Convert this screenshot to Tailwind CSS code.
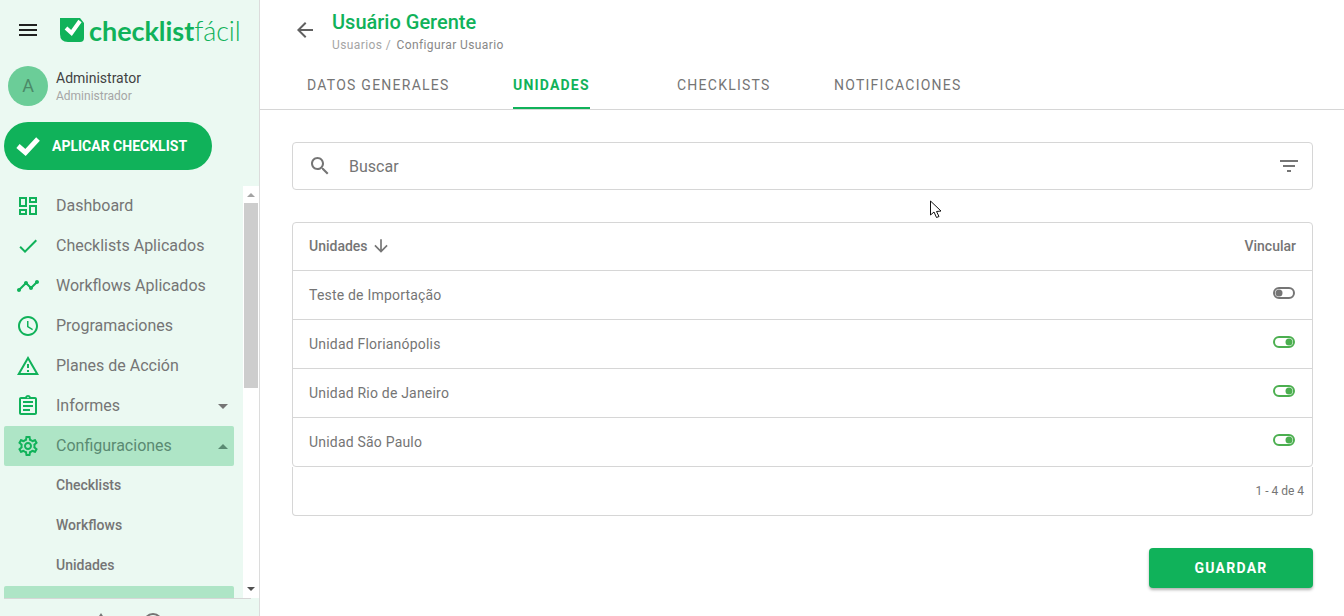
<!DOCTYPE html>
<html lang="pt">
<head>
  <meta charset="UTF-8" />
  <title>Checklist Fácil</title>
  <script src="https://cdn.jsdelivr.net/npm/@tailwindcss/browser@4"></script>
</head>
<body class="h-[616px] overflow-hidden bg-white font-['Roboto',sans-serif] text-[#757575]">
  <div class="relative flex h-[616px]">
    <!-- Sidebar -->
    <aside class="flex h-full w-[260px] shrink-0 flex-col border-r border-[#dcdcdc] bg-[#ebf9f2]">
      <!-- Logo -->
      <div class="flex h-[60px] shrink-0 items-center pl-4">
        <svg class="h-6 w-6 text-[#212121]" viewBox="0 0 24 24" fill="currentColor"><path d="M3 18h18v-2H3v2zm0-5h18v-2H3v2zm0-7v2h18V6H3z"/></svg>
        <svg class="ml-5 h-6 w-6" viewBox="0 0 24 24">
          <path fill="#10b25a" d="M0 0H24V20Q24 24 20 24H8Q0 24 0 16Z"/>
          <path fill="#ebf9f2" d="M17 0H24V5L20 0Z"/>
          <path fill="none" stroke="#fff" stroke-width="4" d="M6 10L11.5 15L20 3"/>
        </svg>
        <span class="ml-[5px] font-['Lato',sans-serif] text-[27px] leading-none tracking-[-0.05px] text-[#10b25a]"><span class="font-bold">checklist</span><span class="font-light">fácil</span></span>
      </div>
      <!-- User -->
      <div class="flex h-[52px] shrink-0 items-center pl-2">
        <div class="flex h-10 w-10 items-center justify-center rounded-full bg-[#6bcd98] text-lg text-[#4b8a68]">A</div>
        <div class="ml-2 pt-px">
          <div class="text-sm leading-[18px] text-[#424242]">Administrator</div>
          <div class="text-xs leading-[18px] text-[#a6a6a6]">Administrador</div>
        </div>
      </div>
      <!-- Apply button -->
      <div class="shrink-0 pl-1 pt-[10px]">
        <div class="flex h-12 w-[208px] items-center rounded-3xl bg-[#10b25a] pl-3 text-sm font-bold text-white">
          <svg class="h-6 w-6" viewBox="0 0 24 24" fill="none" stroke="#fff" stroke-width="5"><path d="M2 12L9.5 18.500L22 5"/></svg>
          <span class="ml-3">APLICAR CHECKLIST</span>
        </div>
      </div>
      <!-- Scrolling menu -->
      <div class="mt-4 flex h-[412px] shrink-0">
        <nav class="w-[243px] overflow-hidden pl-1 pr-[9px] text-base text-[#757575]">
          <a class="flex h-10 items-center pl-3"><svg class="h-6 w-6 fill-[#10b25a]" viewBox="0 0 24 24"><path d="M19 5v2h-4V5h4M9 5v6H5V5h4m10 8v6h-4v-6h4M9 17v2H5v-2h4M21 3h-8v6h8V3zM11 3H3v10h8V3zm10 8h-8v10h8V11zm-10 4H3v6h8v-6z"/></svg><span class="ml-4">Dashboard</span></a>
          <a class="flex h-10 items-center pl-3"><svg class="h-6 w-6 fill-[#10b25a]" viewBox="0 0 24 24"><path d="M9 16.170L4.830 12l-1.420 1.410L9 19 21 7l-1.410-1.410z"/></svg><span class="ml-4">Checklists Aplicados</span></a>
          <a class="flex h-10 items-center pl-3"><svg class="h-6 w-6 fill-[#10b25a]" viewBox="0 0 24 24"><path d="M23 8c0 1.100-.9 2-2 2-.18 0-.35-.02-.51-.07l-3.560 3.550c.05.16.07.34.07.52 0 1.100-.9 2-2 2s-2-.9-2-2c0-.18.02-.36.07-.52l-2.550-2.550c-.16.05-.34.07-.52.07s-.36-.02-.52-.07l-4.550 4.560c.05.16.07.33.07.51 0 1.100-.9 2-2 2s-2-.9-2-2 .9-2 2-2c.18 0 .35.02.51.07l4.560-4.550C8.020 9.360 8 9.180 8 9c0-1.100.9-2 2-2s2 .9 2 2c0 .18-.02.36-.07.52l2.550 2.550c.16-.05.34-.07.52-.07s.36.02.52.07l3.550-3.560C19.020 8.350 19 8.180 19 8c0-1.100.9-2 2-2s2 .9 2 2z"/></svg><span class="ml-4">Workflows Aplicados</span></a>
          <a class="flex h-10 items-center pl-3"><svg class="h-6 w-6 fill-[#10b25a]" viewBox="0 0 24 24"><path d="M11.990 2C6.470 2 2 6.480 2 12s4.470 10 9.990 10C17.520 22 22 17.520 22 12S17.520 2 11.990 2zM12 20c-4.420 0-8-3.580-8-8s3.580-8 8-8 8 3.580 8 8-3.580 8-8 8zm.5-13H11v6l5.250 3.150.75-1.230-4.500-2.670z"/></svg><span class="ml-4">Programaciones</span></a>
          <a class="flex h-10 items-center pl-3"><svg class="h-6 w-6 fill-[#10b25a]" viewBox="0 0 24 24"><path d="M12 5.990L19.530 19H4.470L12 5.990M12 2L1 21h22L12 2zm1 14h-2v2h2v-2zm0-6h-2v4h2v-4z"/></svg><span class="ml-4">Planes de Acción</span></a>
          <a class="flex h-10 items-center pl-3"><svg class="h-6 w-6 fill-[#10b25a]" viewBox="0 0 24 24"><path d="M7 15h7v2H7zm0-4h10v2H7zm0-4h10v2H7zm12-4h-4.180C14.400 1.840 13.300 1 12 1c-1.300 0-2.400.84-2.820 2H5c-1.100 0-2 .9-2 2v14c0 1.100.9 2 2 2h14c1.100 0 2-.9 2-2V5c0-1.100-.9-2-2-2zm-7-.25c.41 0 .75.34.75.75s-.34.75-.75.75-.75-.34-.75-.75.34-.75.75-.75zM19 19H5V5h14v14z"/></svg><span class="ml-4 flex-1">Informes</span><span class="mr-[6px] h-0 w-0 border-x-[5px] border-t-[5px] border-x-transparent border-t-[#757575]"></span></a>
          <a class="flex h-10 items-center rounded-[2px] bg-[#aee5c6] pl-3 text-[#5a8a72]"><svg class="h-6 w-6 fill-[#10b25a]" viewBox="0 0 24 24"><path d="M19.430 12.980c.04-.32.07-.64.07-.98 0-.34-.03-.66-.07-.98l2.110-1.650c.19-.15.24-.42.12-.64l-2-3.460c-.09-.16-.26-.25-.44-.25-.06 0-.12.01-.17.03l-2.490 1c-.52-.4-1.080-.73-1.690-.98l-.38-2.650C14.460 2.180 14.250 2 14 2h-4c-.25 0-.46.18-.49.42l-.38 2.650c-.61.25-1.170.59-1.690.98l-2.490-1c-.06-.02-.12-.03-.18-.03-.17 0-.34.09-.43.25l-2 3.460c-.13.22-.07.49.12.64l2.110 1.650c-.04.32-.07.65-.07.98 0 .33.03.66.07.98l-2.110 1.650c-.19.15-.24.42-.12.64l2 3.460c.09.16.26.25.44.25.06 0 .12-.01.17-.03l2.490-1c.52.4 1.080.73 1.690.98l.38 2.650c.03.24.24.42.49.42h4c.25 0 .46-.18.49-.42l.38-2.650c.61-.25 1.170-.59 1.690-.98l2.490 1c.06.02.12.03.18.03.17 0 .34-.09.43-.25l2-3.460c.12-.22.07-.49-.12-.64l-2.110-1.650zm-1.980-1.710c.04.31.05.52.05.73 0 .21-.02.43-.05.73l-.14 1.130.89.7 1.080.84-.7 1.210-1.270-.51-1.040-.42-.9.68c-.43.32-.84.56-1.250.73l-1.060.43-.16 1.130-.2 1.350h-1.400l-.19-1.350-.16-1.130-1.060-.43c-.43-.18-.83-.41-1.230-.71l-.91-.7-1.060.43-1.270.51-.7-1.210 1.080-.84.89-.7-.14-1.130c-.03-.31-.05-.54-.05-.74s.02-.43.05-.73l.14-1.130-.89-.7-1.080-.84.7-1.210 1.270.51 1.040.42.9-.68c.43-.32.84-.56 1.250-.73l1.060-.43.16-1.130.2-1.350h1.390l.19 1.350.16 1.130 1.060.43c.43.18.83.41 1.230.71l.91.7 1.060-.43 1.270-.51.7 1.210-1.070.85-.89.7.14 1.130zM12 8c-2.210 0-4 1.790-4 4s1.790 4 4 4 4-1.790 4-4-1.790-4-4-4zm0 6c-1.100 0-2-.9-2-2s.9-2 2-2 2 .9 2 2-.9 2-2 2z"/></svg><span class="ml-4 flex-1">Configuraciones</span><span class="mr-[6px] h-0 w-0 border-x-[5px] border-b-[5px] border-x-transparent border-b-[#5a8a72]"></span></a>
          <a class="flex h-10 items-center pb-[2px] pl-[52px] text-sm font-medium text-[#757575]">Checklists</a>
          <a class="flex h-10 items-center pb-[2px] pl-[52px] text-sm font-medium text-[#757575]">Workflows</a>
          <a class="flex h-10 items-center pb-[2px] pl-[52px] text-sm font-medium text-[#757575]">Unidades</a>
          <div class="h-10 rounded-[2px] bg-[#aee5c6]"></div>
        </nav>
        <!-- Scrollbar -->
        <div class="flex w-4 flex-col items-center bg-white">
          <span class="mt-[7px] h-0 w-0 border-x-[4px] border-b-[4px] border-x-transparent border-b-[#a3a3a3]"></span>
          <div class="mt-[6px] h-[185px] w-[14px] bg-[#cdcdcd]"></div>
          <span class="mt-[199px] h-0 w-0 border-x-[4px] border-t-[4px] border-x-transparent border-t-[#505050]"></span>
        </div>
      </div>
      <!-- Footer icons, cut by the window -->
      <div class="ml-1 mr-2 flex shrink-0 justify-center gap-[33px] border-t border-[#d6d6d6] pt-[14px]">
        <span class="h-0 w-0 border-x-[9px] border-b-[14px] border-x-transparent border-b-[#757575]"></span>
        <span class="h-5 w-5 rounded-full border-2 border-[#757575]"></span>
      </div>
    </aside>

    <!-- Main -->
    <main class="min-w-0 flex-1">
      <!-- Header -->
      <header class="h-[110px] border-b border-[#d6d6d6]">
        <div class="flex h-[62px] items-start pl-[33px]">
          <svg class="mt-[18px] h-6 w-6 fill-[#616161]" viewBox="0 0 24 24"><path d="M20 11H7.830l5.590-5.590L12 4l-8 8 8 8 1.410-1.410L7.830 13H20v-2z"/></svg>
          <div class="ml-[15px] pt-[8px]">
            <h1 class="text-xl font-medium leading-[28px] text-[#10b25a]">Usuário Gerente</h1>
            <p class="text-xs leading-[18px] tracking-[0.4px] text-[#a5a5a5]">Usuarios / <span class="ml-[2px] text-[#888]">Configurar Usuario</span></p>
          </div>
        </div>
        <nav class="flex h-[47px] pl-[47px] text-sm uppercase tracking-[1.25px]">
          <div class="w-[206px]"><a class="flex h-full w-max items-center pb-px">Datos generales</a></div>
          <div class="w-[164px]"><a class="flex h-full w-[77px] items-center whitespace-nowrap border-b-2 border-[#10b25a] font-bold tracking-[1.2px] text-[#10b25a]">Unidades</a></div>
          <div class="w-[157px]"><a class="flex h-full w-max items-center pb-px">Checklists</a></div>
          <div><a class="flex h-full w-max items-center pb-px">Notificaciones</a></div>
        </nav>
      </header>

      <div class="pl-8 pr-[31px] pt-8">
        <!-- Search -->
        <div class="flex h-12 items-center rounded border border-[#d6d6d6] pl-[15px] pr-[11px]">
          <svg class="h-6 w-6 fill-[#757575]" viewBox="0 0 24 24"><path d="M15.500 14h-.79l-.28-.27C15.410 12.590 16 11.110 16 9.500 16 5.910 13.090 3 9.500 3S3 5.910 3 9.500 5.910 16 9.500 16c1.610 0 3.090-.59 4.230-1.570l.27.28v.79l5 4.990L20.490 19l-4.990-5zm-6 0C7.010 14 5 11.990 5 9.500S7.010 5 9.500 5 14 7.010 14 9.500 11.990 14 9.500 14z"/></svg>
          <span class="ml-[17px] flex-1 pt-[2px] text-base">Buscar</span>
          <svg class="h-6 w-6 fill-[#757575]" viewBox="0 0 24 24"><path d="M10 18h4v-2h-4v2zM3 6v2h18V6H3zm3 7h12v-2H6v2z"/></svg>
        </div>

        <!-- Table -->
        <div class="mt-8 rounded border border-[#d6d6d6]">
          <div class="flex h-[47px] items-center justify-between px-4 pb-[2px] text-sm font-medium">
            <span class="flex items-center">Unidades
              <svg class="ml-[3px] h-5 w-5 fill-[#757575]" viewBox="0 0 24 24"><path d="M20 12l-1.410-1.410L13 16.170V4h-2v12.170l-5.580-5.590L4 12l8 8 8-8z"/></svg>
            </span>
            <span>Vincular</span>
          </div>
          <div class="flex h-[49px] items-center justify-between border-t border-[#d6d6d6] px-4 text-sm tracking-[0.2px]">
            <span>Teste de Importação</span>
            <svg class="mb-1 h-3 w-6" viewBox="0 0 24 12" fill="none"><rect x="2" y="1" width="20" height="10" rx="5" stroke="#757575" stroke-width="2"/><circle cx="7" cy="6" r="3.500" fill="#757575"/></svg>
          </div>
          <div class="flex h-[49px] items-center justify-between border-t border-[#d6d6d6] px-4 text-sm tracking-[0.2px]">
            <span>Unidad Florianópolis</span>
            <svg class="mb-1 h-3 w-6" viewBox="0 0 24 12" fill="none"><rect x="2" y="1" width="20" height="10" rx="5" stroke="#4caf50" stroke-width="2"/><circle cx="17" cy="6" r="3.500" fill="#4caf50"/></svg>
          </div>
          <div class="flex h-[49px] items-center justify-between border-t border-[#d6d6d6] px-4 text-sm tracking-[0.2px]">
            <span>Unidad Rio de Janeiro</span>
            <svg class="mb-1 h-3 w-6" viewBox="0 0 24 12" fill="none"><rect x="2" y="1" width="20" height="10" rx="5" stroke="#4caf50" stroke-width="2"/><circle cx="17" cy="6" r="3.500" fill="#4caf50"/></svg>
          </div>
          <div class="flex h-[49px] items-center justify-between border-t border-[#d6d6d6] px-4 text-sm tracking-[0.2px]">
            <span>Unidad São Paulo</span>
            <svg class="mb-1 h-3 w-6" viewBox="0 0 24 12" fill="none"><rect x="2" y="1" width="20" height="10" rx="5" stroke="#4caf50" stroke-width="2"/><circle cx="17" cy="6" r="3.500" fill="#4caf50"/></svg>
          </div>
        </div>
        <div class="flex h-[49px] items-center justify-end rounded-b border border-t-0 border-[#d6d6d6] pr-2 text-xs">1 - 4 de 4</div>

        <div class="mt-8 flex justify-end">
          <button class="h-10 w-[164px] rounded bg-[#10b25a] pb-px text-sm font-bold uppercase tracking-[1.25px] text-white shadow-[0_2px_3px_rgba(0,0,0,0.3)]">Guardar</button>
        </div>
      </div>
    </main>

    <!-- Mouse cursor captured in the screenshot -->
    <svg class="absolute left-[929px] top-[200px] h-5 w-[14px]" viewBox="0 0 14 20"><path d="M1.500 1L1.500 15L5 12L7.500 17.500L10 16.500L7.500 11.500L12 11Z" fill="#fff" stroke="#111" stroke-width="1"/></svg>
  </div>
</body>
</html>
